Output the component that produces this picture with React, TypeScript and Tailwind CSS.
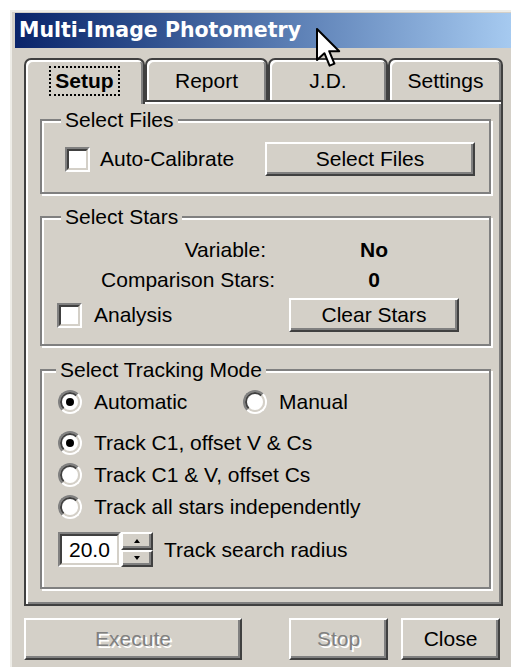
import React from "react";

const raised =
  "border-2 border-t-white border-l-white border-r-[#404040] border-b-[#404040] shadow-[inset_-2px_-2px_0_#808080] bg-[#d4d0c8]";

function Button({
  label,
  className = "",
  disabled = false,
}: {
  label: string;
  className?: string;
  disabled?: boolean;
}) {
  return (
    <div
      className={`flex items-center justify-center ${raised} ${className} ${
        disabled ? "text-[#808080] [text-shadow:2px_2px_0_#fff]" : "text-black"
      }`}
    >
      {label}
    </div>
  );
}

function CheckBox() {
  return (
    <div className="flex h-[25px] w-[25px] border-2 border-t-[#808080] border-l-[#808080] border-r-white border-b-white">
      <div className="flex-1 border-2 border-t-[#404040] border-l-[#404040] border-r-[#d4d0c8] border-b-[#d4d0c8] bg-white" />
    </div>
  );
}

function Radio({ checked = false }: { checked?: boolean }) {
  return (
    <div className="flex h-[24px] w-[24px] rounded-full border-2 border-t-[#808080] border-l-[#808080] border-r-white border-b-white">
      <div className="flex flex-1 items-center justify-center rounded-full border-2 border-t-[#404040] border-l-[#404040] border-r-[#d4d0c8] border-b-[#d4d0c8] bg-white">
        {checked && <div className="h-[8px] w-[8px] rounded-full bg-black" />}
      </div>
    </div>
  );
}

function Group({
  label,
  labelLeft,
  className = "",
  children,
}: {
  label: string;
  labelLeft: string;
  className?: string;
  children: React.ReactNode;
}) {
  return (
    <div
      className={`relative border-2 border-[#808080] shadow-[inset_2px_2px_0_#fff,2px_2px_0_#fff] ${className}`}
    >
      <span
        className={`absolute -top-[13px] ${labelLeft} bg-[#d4d0c8] px-[4px] leading-[24px]`}
      >
        {label}
      </span>
      {children}
    </div>
  );
}

function Tab({
  label,
  width,
  active = false,
}: {
  label: string;
  width: string;
  active?: boolean;
}) {
  if (active) {
    return (
      <div
        className={`relative z-10 -mb-[4px] flex h-[46px] ${width} justify-center rounded-t-[7px] border-2 border-b-0 border-[#404040] bg-[#d4d0c8] pt-[6px] shadow-[inset_2px_2px_0_#fff,inset_-2px_0_0_#808080]`}
      >
        <div className="h-[30px] border-2 border-dotted border-black px-[4px] font-bold leading-[26px]">
          {label}
        </div>
      </div>
    );
  }
  return (
    <div
      className={`flex h-[42px] ${width} justify-center rounded-t-[7px] border-2 border-b-0 border-[#404040] bg-[#d4d0c8] pt-[8px] leading-[26px] shadow-[inset_2px_2px_0_#fff,inset_-2px_0_0_#808080]`}
    >
      {label}
    </div>
  );
}

function SpinBox() {
  return (
    <div className="flex h-[35px] items-stretch">
      <div className="flex w-[63px] border-2 border-t-[#808080] border-l-[#808080] border-r-white border-b-white">
        <div className="flex flex-1 items-center border-2 border-t-[#404040] border-l-[#404040] border-r-[#d4d0c8] border-b-[#d4d0c8] bg-white pl-[7px]">
          20.0
        </div>
      </div>
      <div className="flex w-[32px] flex-col">
        <div className={`flex flex-1 items-center justify-center ${raised}`}>
          <svg width="6" height="4" viewBox="0 0 6 4">
            <path d="M3 0 L6 4 H0 Z" fill="#000" />
          </svg>
        </div>
        <div className={`flex flex-1 items-center justify-center ${raised}`}>
          <svg width="6" height="4" viewBox="0 0 6 4">
            <path d="M0 0 H6 L3 4 Z" fill="#000" />
          </svg>
        </div>
      </div>
    </div>
  );
}

export default function App() {
  return (
    <div className="relative h-[667px] w-[511px] overflow-hidden bg-white font-['Liberation_Sans',Arial,sans-serif] text-[21px] text-black">
      <div className="ml-[10px] mt-[10px] h-[680px] border-l-2 border-t-2 border-[#eeede8] bg-[#d4d0c8] pl-[3px] pt-[1px]">
        {/* caption bar */}
        <div className="flex h-[35px] items-center bg-gradient-to-r from-[#0a246a] to-[#a6caf0] pl-[4px] font-['DejaVu_Sans',sans-serif] text-[20.5px] font-bold text-white">
          Multi-Image Photometry
        </div>

        <div className="ml-[9px] mt-[10px] w-[479px]">
          {/* tab strip */}
          <div className="flex items-end">
            <Tab label="Setup" width="w-[121px]" active />
            <Tab label="Report" width="w-[123px]" />
            <Tab label="J.D." width="w-[120px]" />
            <Tab label="Settings" width="w-[115px]" />
          </div>

          {/* tab page */}
          <div className="flex h-[506px] flex-col border-2 border-[#404040] pl-[14px] pr-[10px] pt-[17px] shadow-[inset_2px_2px_0_#fff,inset_-2px_-2px_0_#808080]">
            <Group label="Select Files" labelLeft="left-[19px]" className="h-[75px]">
              <div className="flex items-center pl-[23px] pr-[14px] pt-[21px]">
                <CheckBox />
                <span className="ml-[10px]">Auto-Calibrate</span>
                <Button label="Select Files" className="ml-auto h-[34px] w-[210px]" />
              </div>
            </Group>

            <Group label="Select Stars" labelLeft="left-[19px]" className="mt-[22px] h-[130px]">
              <div className="flex flex-col pt-[20px]">
                <div className="flex h-[24px] items-center">
                  <span className="w-[224px] text-right">Variable:</span>
                  <span className="ml-[78px] w-[60px] text-center font-bold">No</span>
                </div>
                <div className="mt-[6px] flex h-[24px] items-center">
                  <span className="w-[233px] text-right">Comparison Stars:</span>
                  <span className="ml-[69px] w-[60px] text-center font-bold">0</span>
                </div>
                <div className="mt-[6px] flex h-[34px] items-center pl-[15px] pr-[30px]">
                  <CheckBox />
                  <span className="ml-[12px]">Analysis</span>
                  <Button label="Clear Stars" className="ml-auto h-[34px] w-[170px]" />
                </div>
              </div>
            </Group>

            <Group
              label="Select Tracking Mode"
              labelLeft="left-[14px]"
              className="mt-[23px] h-[220px]"
            >
              <div className="flex flex-col pl-[16px] pt-[17px]">
                <div className="flex h-[28px] items-center">
                  <div className="flex w-[185px] items-center">
                    <Radio checked />
                    <span className="ml-[12px]">Automatic</span>
                  </div>
                  <Radio />
                  <span className="ml-[12px]">Manual</span>
                </div>
                <div className="mt-[13px] flex h-[28px] items-center">
                  <Radio checked />
                  <span className="ml-[12px]">Track C1, offset V &amp; Cs</span>
                </div>
                <div className="mt-[4px] flex h-[28px] items-center">
                  <Radio />
                  <span className="ml-[12px]">Track C1 &amp; V, offset Cs</span>
                </div>
                <div className="mt-[4px] flex h-[28px] items-center">
                  <Radio />
                  <span className="ml-[12px]">Track all stars independently</span>
                </div>
                <div className="mt-[11px] flex items-center">
                  <SpinBox />
                  <span className="ml-[11px]">Track search radius</span>
                </div>
              </div>
            </Group>
          </div>

          {/* dialog buttons */}
          <div className="mt-[12px] flex">
            <Button label="Execute" className="h-[42px] w-[218px]" disabled />
            <Button label="Stop" className="ml-[47px] h-[42px] w-[99px]" disabled />
            <Button label="Close" className="ml-[13px] h-[42px] w-[99px]" />
          </div>
        </div>
      </div>

      {/* mouse pointer */}
      <svg
        className="absolute left-[316px] top-[28px]"
        width="26"
        height="40"
        viewBox="0 0 13 20"
      >
        <path
          d="M0.5 0.5 V16 L4.2 12.6 L6.8 18.8 L9.2 17.8 L6.6 11.6 H11.6 Z"
          fill="#fff"
          stroke="#000"
          strokeWidth="1"
          strokeLinejoin="round"
        />
      </svg>
    </div>
  );
}
